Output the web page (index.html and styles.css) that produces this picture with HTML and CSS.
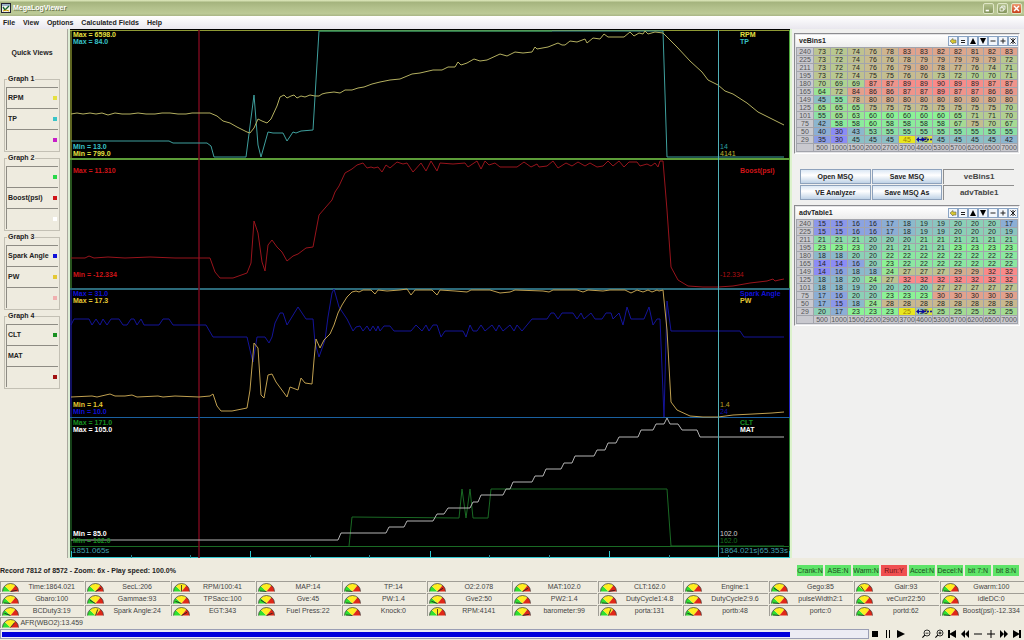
FILE: index.html
```
<!DOCTYPE html>
<html lang="en">
<head>
    <meta charset="UTF-8">
    <meta name="viewport" content="width=device-width, initial-scale=1.0">
    <title>MegaLogViewer</title>
    <link rel="stylesheet" href="styles.css">
</head>
<body>
    <header class="titlebar">
        <svg class="app-icon" viewBox="0 0 10 10"><rect x="0.5" y="0.5" width="9" height="9" fill="#f4f4e8" stroke="#223"/><path d="M1 2h8" stroke="#47a" stroke-width="1"/><path d="M2 4l2 3 4-4" fill="none" stroke="#163" stroke-width="1.4"/><path d="M2 8l3-1 3 1" fill="none" stroke="#c90"/></svg>
        <h1>MegaLogViewer</h1>
        <div class="window-buttons">
            <button class="win" aria-label="Minimize"><svg viewBox="0 0 11 11"><path d="M2 8h4" stroke="#fff" stroke-width="2"/></svg></button>
            <button class="win" aria-label="Restore"><svg viewBox="0 0 11 11"><path d="M4.5 4V2.5h4v4H7M2.5 4.5h4v4h-4z" fill="none" stroke="#fff"/></svg></button>
            <button class="win close" aria-label="Close"><svg viewBox="0 0 11 11"><path d="M2.5 2.5l6 6M8.5 2.5l-6 6" stroke="#fff" stroke-width="1.8"/></svg></button>
        </div>
    </header>
    <nav class="menubar">
        <a href="#">File</a>
        <a href="#">View</a>
        <a href="#">Options</a>
        <a href="#">Calculated Fields</a>
        <a href="#">Help</a>
    </nav>

    <main class="workspace">
        <aside class="sidebar">
            <h2>Quick Views</h2>
            <fieldset>
                <legend>Graph 1</legend>
                <div class="field">RPM<i class="swatch yellow"></i></div>
                <div class="field">TP<i class="swatch cyan"></i></div>
                <div class="field"><i class="swatch magenta"></i></div>
            </fieldset>
            <fieldset>
                <legend>Graph 2</legend>
                <div class="field"><i class="swatch lime"></i></div>
                <div class="field">Boost(psi)<i class="swatch red"></i></div>
                <div class="field"><i class="swatch white"></i></div>
            </fieldset>
            <fieldset>
                <legend>Graph 3</legend>
                <div class="field">Spark Angle<i class="swatch blue"></i></div>
                <div class="field">PW<i class="swatch gold"></i></div>
                <div class="field"><i class="swatch pink"></i></div>
            </fieldset>
            <fieldset>
                <legend>Graph 4</legend>
                <div class="field">CLT<i class="swatch green"></i></div>
                <div class="field">MAT</div>
                <div class="field"><i class="swatch darkred"></i></div>
            </fieldset>
        </aside>

        <section class="chart">
            <svg class="plot" viewBox="70 29 720 529" preserveAspectRatio="none">
                <!-- graph frames -->
                <path d="M70 30.5H790" stroke="#8f9a35"/>
                <path d="M71 30V159" stroke="#b9c840"/>
                <path d="M71 159V289" stroke="#4fa83c"/>
                <path d="M789.5 30V289" stroke="#4fa83c"/>
                <path d="M71 289V418M789.5 289V418" stroke="#2020c0"/>
                <path d="M71 418V558M789.5 418V558" stroke="#2a8030"/>
                <path d="M70 159H790" stroke="#5c9c38" stroke-width="2"/>
                <path d="M70 289H790" stroke="#2c6a7a" stroke-width="2"/>
                <path d="M70 417.5H790" stroke="#1a60a0"/>
                <path d="M70 546.5H790" stroke="#1a6a24"/>
                <!-- time axis -->
                <path d="M70 557.5H790" stroke="#30c8d0"/>
                <path d="M71.5 551V558M250.5 551V558M430.5 551V558M609.5 551V558M789.5 551V558" stroke="#30c8d0"/>
                <path d="M131.5 555V558M190.5 555V558M310.5 555V558M369.5 555V558M489.5 555V558M549.5 555V558M669.5 555V558M728.5 555V558" stroke="#24808c"/>
                <path d="M199 30V558" stroke="#74081c" stroke-width="1.5"/>
                <!-- graph 1 -->
                <polyline stroke="#3fa09e" points="71,141 169,141 173,143 207,143 211,146 214,157 246,157 254,95 258,145 261,157 268,132 273,133 283,133 287,141 293,132 296,133 301,131 313,130 316,80 319,31 663,31 667,157 784,157"/>
                <path d="M319 31H552" stroke="#3f9a48"/>
                <polyline stroke="#b4b060" points="71,114 77,113 83,114 90,113 96,114 102,113 108,115 115,113 122,114 130,114 138,113 146,114 155,114 162,113 170,113 178,114 186,114 192,113 210,113 217,116 223,121 230,123 237,127 247,132 250,133 254,128 258,119 262,121 267,123 271,119 277,106 280,97 284,95 287,98 291,96 294,95 297,98 301,96 305,97 310,95 315,96 319,96 322,94 326,93 334,92 340,93 345,90 352,90 358,88 364,87 372,84 380,82 390,80 400,79 412,74 420,73 433,70 442,70 448,67 455,67 458,62 461,65 467,63 474,59 480,61 487,60 500,54 507,56 515,52 523,53 532,52 535,47 537,49 548,47 558,43 562,45 565,45 570,41 577,42 585,39 587,43 593,38 600,39 604,34 608,37 617,37 624,37 630,32 634,36 639,33 643,34 645,31 648,34 655,32 663,33 668,38 677,47 690,61 702,72 708,80 718,85 725,91 733,94 747,103 758,112 768,117 784,125"/>
                <!-- graph 2 -->
                <polyline stroke="#98141c" points="71,258 85,258 89,256 94,258 108,257 125,258 150,257 175,258 210,258 215,272 220,278 233,278 247,273 251,263 254,221 258,233 262,262 265,271 268,245 272,240 277,247 282,252 287,261 293,256 298,254 306,248 313,247 319,215 332,200 335,192 339,186 345,173 352,169 357,165 363,163 367,168 371,167 374,168 378,167 382,172 386,165 390,168 397,162 403,164 407,163 413,172 421,163 426,171 431,161 437,171 440,163 453,164 465,163 468,167 477,161 481,169 485,161 489,165 495,163 500,167 517,167 524,162 531,167 537,164 539,167 547,166 553,161 558,168 566,163 572,166 578,162 585,166 590,163 597,167 603,166 608,161 613,166 619,161 624,167 629,162 637,162 640,166 647,164 651,166 655,163 658,167 660,161 663,161 667,210 671,267 678,280 688,286 703,287 718,287 733,286 750,283 767,281 773,279 775,281 779,280 784,279"/>
                <!-- graph 3 -->
                <polyline stroke="#14149a" points="71,325 74,319 89,319 92,325 96,319 100,325 103,319 107,325 111,319 119,319 123,325 127,325 131,319 134,319 137,325 141,319 144,325 159,325 163,319 169,319 173,325 206,325 213,337 247,337 250,350 253,362 257,337 265,337 269,343 272,337 275,323 280,313 283,313 287,325 298,307 306,319 313,319 315,343 319,357 325,340 328,317 332,293 334,289 339,307 347,319 353,331 356,327 360,326 363,331 367,326 370,331 373,326 376,331 378,326 380,331 384,326 390,326 394,331 411,331 416,325 422,331 426,325 429,331 433,325 437,325 441,337 445,331 463,331 466,337 470,325 473,331 477,331 481,325 485,331 492,325 496,331 499,325 503,331 510,325 514,331 517,325 522,331 527,325 532,319 547,319 551,313 554,313 558,319 562,313 573,313 577,319 581,313 584,319 591,313 595,319 602,319 606,313 611,313 613,319 619,313 623,325 627,307 631,319 644,319 649,307 653,325 657,319 660,319 664,417 667,301 671,331 740,331 744,337 784,337"/>
                <polyline stroke="#c0a050" points="71,397 92,396 97,397 110,394 115,396 125,396 132,395 137,397 158,396 163,397 175,396 199,397 210,396 213,394 217,406 221,411 232,411 247,408 250,390 254,343 258,348 261,395 264,398 268,375 272,374 276,382 287,397 290,387 298,390 301,378 305,383 312,384 314,360 316,339 320,348 324,340 330,334 334,325 338,313 342,305 347,297 352,292 356,291 359,292 363,290 371,290 375,294 378,290 387,291 400,290 407,289 411,295 415,290 432,290 437,295 440,290 455,291 467,292 471,290 490,290 500,293 510,292 515,290 543,291 549,292 553,290 577,290 583,292 588,290 603,291 610,290 625,290 631,293 637,290 643,292 648,290 652,292 657,290 659,291 663,290 667,330 671,402 677,410 690,416 703,417 718,417 733,415 753,414 772,413 784,412"/>
                <!-- graph 4 -->
                <polyline stroke="#1a6a24" points="349,546 352,517 459,518 462,489 466,518 470,489 473,518 488,518 491,489 667,489 671,546 784,546"/>
                <polyline stroke="#b4b4b4" points="71,540 338,540 341,533 386,533 389,527 404,527 407,521 433,521 437,514 444,514 448,508 470,508 473,502 478,502 481,495 503,495 506,489 510,489 513,482 532,482 535,476 543,476 546,469 561,469 564,463 572,463 575,456 594,456 597,450 605,450 608,443 616,443 619,437 638,437 641,430 653,430 656,424 664,424 667,418 670,424 678,424 682,430 697,430 700,437 784,437"/>
                <path d="M718.5 30V558" stroke="#50b0b8"/>
            </svg>
            <div class="graph">
                <div class="range"><p><b class="yellow">Max = 6598.0</b><b class="cyan">Max = 84.0</b></p><p><b class="cyan">Min = 13.0</b><b class="yellow">Min = 799.0</b></p></div>
                <div class="cursor"><p><b class="yellow">RPM</b><b class="cyan">TP</b></p><p><span class="cyan">14</span><span class="yellow">4141</span></p></div>
            </div>
            <div class="graph single">
                <div class="range"><p><b class="red">Max = 11.310</b></p><p><b class="red">Min = -12.334</b></p></div>
                <div class="cursor"><p><b class="red">Boost(psi)</b></p><p><span class="red">-12.334</span></p></div>
            </div>
            <div class="graph">
                <div class="range"><p><b class="blue">Max = 31.0</b><b class="gold">Max = 17.3</b></p><p><b class="gold">Min = 1.4</b><b class="blue">Min = 10.0</b></p></div>
                <div class="cursor"><p><b class="blue">Spark Angle</b><b class="gold">PW</b></p><p><span class="gold">1.4</span><span class="blue">24</span></p></div>
            </div>
            <div class="graph">
                <div class="range"><p><b class="green">Max = 171.0</b><b class="white">Max = 105.0</b></p><p><b class="white">Min = 85.0</b><b class="green">Min = 162.0</b></p></div>
                <div class="cursor"><p><b class="green">CLT</b><b class="white">MAT</b></p><p><span class="white">102.0</span><span class="green">162.0</span></p></div>
            </div>
            <div class="time-axis"><span>1851.065s</span><span class="now">1864.021s|65.353s</span></div>
        </section>

        <aside class="tuning">
            <section class="map-panel">
                <div class="map-head"><h3>veBins1</h3><div class="map-tools"></div></div>
                <table class="map" id="veBins1"></table>
            </section>
            <div class="actions">
                <button class="action">Open MSQ</button>
                <button class="action">Save MSQ</button>
                <span class="tab">veBins1</span>
                <button class="action">VE Analyzer</button>
                <button class="action">Save MSQ As</button>
                <span class="tab">advTable1</span>
            </div>
            <section class="map-panel">
                <div class="map-head"><h3>advTable1</h3><div class="map-tools"></div></div>
                <table class="map" id="advTable1"></table>
            </section>
        </aside>
    </main>

    <footer>
        <div class="status">
            <strong>Record 7812 of 8572 - Zoom: 6x - Play speed: 100.0%</strong>
            <div class="flags">
                <span>Crank:N</span><span>ASE:N</span><span>Warm:N</span><span class="on">Run:Y</span><span>Accel:N</span><span>Decel:N</span><span>bit 7:N</span><span>bit 8:N</span>
            </div>
        </div>
        <div class="gauges" id="gauges"></div>
        <div class="playbar">
            <progress value="7812" max="8572" aria-label="Log position"></progress>
            <div class="controls">
                <button aria-label="Stop"><svg viewBox="0 0 12 12"><path d="M3 3h6v6H3z"/></svg></button>
                <button aria-label="Pause"><svg viewBox="0 0 12 12"><path d="M4 2h1v8H4zM7 2h1v8H7z"/></svg></button>
                <button aria-label="Play"><svg viewBox="0 0 12 12"><path d="M2 2l8 4-8 4z"/></svg></button>
                <button class="after-gap" aria-label="Zoom out"><svg viewBox="0 0 12 12"><circle cx="7" cy="5" r="3" fill="none" stroke="#000" stroke-width="0.8"/><path d="M5.5 4.7h3v.8h-3zM4.4 6.8l.8.8L2.8 10 2 9.2z"/></svg></button>
                <button aria-label="Zoom in"><svg viewBox="0 0 12 12"><circle cx="7" cy="5" r="3" fill="none" stroke="#000" stroke-width="0.8"/><path d="M5.5 4.6h1.1V3.5h.8v1.1h1.1v.8H7.4v1.1h-.8V5.4H5.5zM4.4 6.8l.8.8L2.8 10 2 9.2z"/></svg></button>
                <button aria-label="First record"><svg viewBox="0 0 12 12"><path d="M2 2h2v3.5L10 2v8L4 6.5V10H2z"/></svg></button>
                <button aria-label="Rewind"><svg viewBox="0 0 12 12"><path d="M6 2v8L2 6zM10 2v8L6 6z"/></svg></button>
                <button aria-label="Slower"><svg viewBox="0 0 12 12"><path d="M2 5.5h8v1H2z"/></svg></button>
                <button aria-label="Faster"><svg viewBox="0 0 12 12"><path d="M5.5 2h1v3.5H10v1H6.5V10h-1V6.5H2v-1h3.5z"/></svg></button>
                <button aria-label="Fast forward"><svg viewBox="0 0 12 12"><path d="M2 2v8l4-4zM6 2v8l4-4z"/></svg></button>
                <button aria-label="Last record"><svg viewBox="0 0 12 12"><path d="M10 2H8v3.5L2 2v8l6-3.5V10h2z"/></svg></button>
            </div>
        </div>
    </footer>
    <script src="script.js"></script>
</body>
</html>
```
FILE: styles.css
```
* {
    box-sizing: border-box;
}
body {
    margin: 0;
    min-height: 100vh;
    display: flex;
    flex-direction: column;
    font-family: "Liberation Sans", Arial, sans-serif;
    font-size: 7px;
    line-height: 8px;
    color: #222;
    background: #eeebdf;
}
h1, h2, h3, p, fieldset {
    margin: 0;
    padding: 0;
}
button {
    font: inherit;
    padding: 0;
    margin: 0;
}
svg {
    display: block;
}
.titlebar {
    height: 16px;
    display: flex;
    align-items: center;
    gap: 2px;
    padding: 0 2px 0 1px;
    background: linear-gradient(#e2ecc0, #a5b47e 15%, #b3c18c 50%, #bcca97 85%, #a9b587);
}
.app-icon {
    width: 10px;
    height: 10px;
}
.titlebar h1 {
    flex: 1;
    font-size: 7px;
    color: #fff;
    text-shadow: 1px 1px 0 #6d7850;
}
.window-buttons {
    display: flex;
    gap: 3px;
}
.win {
    width: 11px;
    height: 11px;
    border: 1px solid #dfe6c6;
    border-radius: 2px;
    background: linear-gradient(#b4c28e, #84955c);
}
.win svg {
    width: 9px;
    height: 9px;
}
.win.close {
    background: linear-gradient(#ee9a72, #c8401c);
}
.menubar {
    height: 13px;
    display: flex;
    align-items: center;
    gap: 8px;
    padding: 0 3px;
    background: linear-gradient(#fff, #e9e7ee);
    font-weight: bold;
}
.menubar a {
    color: #222;
    text-decoration: none;
}
.workspace {
    flex: 1;
    display: grid;
    grid-template-columns: 70px 1fr 234px;
}

/* left column */
.sidebar {
    display: flex;
    flex-direction: column;
    gap: 2px;
    padding: 20px 8px 0 4px;
    font-weight: bold;
    border-right: 2px solid #dcecd4;
    box-shadow: inset -1px 0 0 #a9a79e;
}
.sidebar h2 {
    font-size: 7px;
    text-align: center;
    margin-bottom: 16px;
}
fieldset {
    min-width: 0;
    border: 1px solid #c3c0b4;
    padding: 4px 1px 1px;
}
legend {
    margin-left: 1px;
    padding: 0 1px;
}
.field {
    height: 21px;
    display: flex;
    align-items: center;
    justify-content: space-between;
    padding: 0 1px 0 1px;
    border-top: 1px solid #8e8c84;
    border-left: 1px solid #8e8c84;
}
.swatch {
    width: 4px;
    height: 4px;
    margin-left: auto;
    background: currentColor;
}
.yellow { color: #e6e040; }
.cyan { color: #38c4c8; }
.magenta { color: #c81ec8; }
.lime { color: #28d848; }
.red { color: #d01418; }
.white { color: #fff; }
.blue { color: #1010d8; }
.gold { color: #e4c834; }
.pink { color: #f0b0b0; }
.green { color: #189020; }
.darkred { color: #a01010; }

/* graphs */
.chart {
    position: relative;
    display: grid;
    grid-template-rows: 130fr 129fr 129fr 129fr 12px;
    background: #000;
}
.plot {
    position: absolute;
    left: 0;
    top: 0;
    width: 100%;
    height: 100%;
    fill: none;
}
.plot * {
    vector-effect: non-scaling-stroke;
}
.graph {
    position: relative;
    display: flex;
    justify-content: space-between;
    padding: 2px 0 2px 3px;
}
.graph.single {
    padding: 8px 0 10px 3px;
}
.range, .cursor {
    display: flex;
    flex-direction: column;
    justify-content: space-between;
    line-height: 7px;
}
.cursor {
    width: 70px;
}
.cursor p:first-child {
    padding-left: 20px;
}
.graph b, .graph span {
    display: block;
}
.graph span {
    opacity: 0.8;
}
.time-axis {
    position: relative;
    display: flex;
    justify-content: space-between;
    padding-left: 2px;
    line-height: 10px;
    font-size: 8px;
    color: #40a0b0;
}
.time-axis .now {
    width: 70px;
}

/* tuning maps */
.tuning {
    padding: 4px 4px 0 2px;
    border-left: 2px solid #dcf2cc;
    background: #f0f0ef;
}
.map-panel {
    padding: 1px;
    border: 1px solid #8c8c90;
    border-right-color: #fff;
    border-bottom-color: #fff;
    background: #e4e4e6;
}
.map-head {
    display: flex;
    align-items: center;
    justify-content: space-between;
    height: 12px;
    padding-left: 3px;
    background: linear-gradient(#fff, #ececec);
}
.map-head h3 {
    font-size: 7px;
}
.map-tools {
    display: flex;
}
.map-tools button {
    width: 10px;
    height: 10px;
    border: 1px solid #8aa4c4;
    background: #f2f6fb;
}
.map-tools svg {
    width: 8px;
    height: 8px;
}
.map {
    width: 100%;
    table-layout: fixed;
    border-collapse: collapse;
    line-height: 7px;
    text-align: center;
}
.map td, .map th {
    padding: 0;
    height: 8px;
    border: 1px solid #a2a4ac;
    font-weight: normal;
    white-space: nowrap;
}
.map th {
    color: #555;
    background: #c9c9cf;
}
.map th:first-child {
    width: 17px;
}
.map .tracked {
    background: #e8e820;
    color: #a08000;
}
.map .trace {
    position: relative;
    background: linear-gradient(90deg, #8cc0c8 30%, #e8e820);
}
.trace svg {
    position: absolute;
    left: 0;
    top: 1px;
    width: 100%;
    height: 5px;
}
.actions {
    display: grid;
    grid-template-columns: repeat(3, 1fr);
    gap: 1px;
    padding: 15px 6px 5px;
    font-weight: bold;
}
.action {
    height: 15px;
    border: 1px solid #8ea2bc;
    background: linear-gradient(#dbe7f4, #fff 40%, #bfd2e6);
    color: #222;
}
.tab {
    height: 15px;
    line-height: 14px;
    font-size: 8px;
    text-align: center;
    color: #444;
    border-top: 1px solid #8e8e8e;
    border-left: 1px solid #8e8e8e;
}

/* status, gauges and playback */
.status {
    height: 23px;
    display: flex;
    align-items: center;
    justify-content: space-between;
    padding: 2px 5px 0 0;
}
.flags {
    display: flex;
    gap: 2px;
}
.flags span {
    width: 26px;
    line-height: 11px;
    text-align: center;
    background: #5ee468;
    color: #1c4c20;
}
.flags .on {
    background: #f05050;
    color: #701010;
}
.gauges {
    display: grid;
    grid-template-columns: repeat(12, 1fr);
    gap: 1px;
}
.gauge {
    display: flex;
    align-items: center;
    height: 11px;
    padding-left: 1px;
    border-top: 1px solid #a09e96;
    border-left: 1px solid #a09e96;
    color: #444;
    white-space: nowrap;
}
.gauge svg {
    width: 17px;
    height: 9px;
}
.gauge span {
    flex: 1;
    text-align: center;
}
.playbar {
    display: flex;
    align-items: center;
    height: 12px;
}
progress {
    flex: 1;
    height: 10px;
    padding: 2px 1px 1px;
    appearance: none;
    border: 1px solid #9a9eb4;
    background: #ececf4;
}
progress::-webkit-progress-bar {
    background: #ececf4;
}
progress::-webkit-progress-value {
    background: #0000dc;
}
.controls {
    display: flex;
}
.controls button {
    width: 13px;
    height: 12px;
    border: 0;
    background: none;
}
.controls svg {
    width: 12px;
    height: 12px;
}
.controls .after-gap {
    margin-left: 12px;
}
```
FILE: script.js
```
const load = [240, 225, 211, 195, 180, 165, 149, 125, 101, 75, 50, 29];

const maps = {
    veBins1: {
        low: 30, high: 90,
        rpm: [500, 1000, 1500, 2000, 2700, 3700, 4600, 5300, 5700, 6200, 6500, 7000],
        rows: [
            [73, 72, 74, 76, 78, 83, 83, 82, 82, 81, 82, 83],
            [73, 72, 74, 76, 76, 78, 79, 79, 79, 79, 79, 72],
            [73, 72, 74, 76, 76, 79, 80, 78, 77, 76, 74, 71],
            [73, 72, 74, 75, 75, 76, 76, 73, 72, 70, 70, 71],
            [70, 69, 69, 87, 87, 89, 89, 90, 89, 89, 87, 87],
            [64, 72, 84, 86, 86, 87, 87, 89, 87, 87, 86, 86],
            [45, 55, 78, 80, 80, 80, 80, 80, 80, 80, 80, 80],
            [65, 65, 65, 75, 75, 75, 75, 75, 75, 75, 75, 70],
            [55, 65, 63, 60, 60, 60, 60, 60, 65, 71, 71, 70],
            [42, 58, 58, 60, 58, 58, 58, 58, 67, 75, 70, 67],
            [40, 30, 43, 53, 55, 55, 55, 55, 55, 55, 55, 55],
            [35, 30, 45, 45, 45, 45, 45, 45, 45, 45, 45, 42]
        ]
    },
    advTable1: {
        low: 14, high: 32,
        rpm: [500, 1000, 1500, 2200, 2900, 3700, 4600, 5300, 5700, 6200, 6500, 7000],
        rows: [
            [15, 15, 16, 16, 17, 18, 19, 19, 20, 20, 20, 17],
            [15, 15, 16, 16, 17, 18, 19, 19, 20, 20, 20, 19],
            [21, 21, 21, 20, 20, 20, 21, 21, 21, 21, 21, 21],
            [23, 23, 23, 20, 21, 21, 21, 21, 23, 23, 23, 23],
            [18, 18, 20, 20, 22, 22, 22, 22, 22, 22, 22, 22],
            [14, 14, 16, 20, 23, 22, 22, 22, 22, 22, 22, 22],
            [14, 16, 18, 18, 24, 27, 27, 27, 29, 29, 32, 32],
            [18, 18, 20, 24, 27, 32, 32, 32, 32, 32, 32, 32],
            [18, 18, 19, 20, 20, 20, 20, 27, 27, 27, 27, 27],
            [17, 16, 20, 20, 23, 23, 23, 30, 30, 30, 30, 30],
            [17, 15, 18, 24, 28, 28, 28, 28, 28, 28, 28, 28],
            [20, 17, 23, 23, 23, 25, 25, 25, 25, 25, 25, 25]
        ]
    }
};

// blue at the low end, green in the middle, red at the high end
function heat(value, low, high) {
    const t = (value - low) / (high - low);
    const stops = t < 0.5 ? [[140, 140, 245], [140, 242, 150]] : [[140, 242, 150], [250, 138, 138]];
    const k = t < 0.5 ? t * 2 : (t - 0.5) * 2;
    return `rgb(${stops[0].map((c, i) => Math.round(c + (stops[1][i] - c) * k)).join(',')})`;
}

const trace = '<svg viewBox="0 0 16 5" preserveAspectRatio="none"><path d="M0 2.5L3 0V2H10V3H3V5z" fill="#0808a0"/><circle cx="7" cy="2.5" r="1.5" fill="#0808a0"/><circle cx="12" cy="2.5" r="1" fill="#0808a0"/><circle cx="15" cy="2.5" r="1" fill="#0808a0"/></svg>';

for (const [id, map] of Object.entries(maps)) {
    let html = '<tbody>';
    map.rows.forEach((row, r) => {
        html += `<tr><th scope="row">${load[r]}</th>`;
        row.forEach((value, c) => {
            if (r === 11 && c === 5) {
                html += `<td class="tracked">${value}</td>`;
            } else if (r === 11 && c === 6) {
                html += `<td class="trace">${value}${trace}</td>`;
            } else {
                html += `<td style="background:${heat(value, map.low, map.high)}">${value}</td>`;
            }
        });
        html += '</tr>';
    });
    html += '<tr><th></th>' + map.rpm.map(v => `<th scope="col">${v}</th>`).join('') + '</tr></tbody>';
    document.getElementById(id).innerHTML = html;
}

const tools = [
    ['Load', '<path d="M1 4L4 1.5V3H7V6H4V7z" fill="#d8c830" stroke="#665" stroke-width="0.6"/>'],
    ['Set', '<path d="M2 3.5h4M2 5.5h4" stroke="#222"/>'],
    ['Up', '<path d="M4 1L7 7H1z"/>'],
    ['Down', '<path d="M1 1H7L4 7z"/>'],
    ['Subtract', '<path d="M1.5 4h5" stroke="#222"/>'],
    ['Add', '<path d="M1.5 4h5M4 1.5v5" stroke="#222"/>'],
    ['Multiply', '<path d="M1.5 1.5l5 5M6.5 1.5l-5 5M4 1v6" stroke="#222"/>']
];
document.querySelectorAll('.map-tools').forEach(bar => {
    bar.innerHTML = tools.map(([name, shape]) =>
        `<button aria-label="${name}"><svg viewBox="0 0 8 8">${shape}</svg></button>`).join('');
});

// [label, needle angle], 0 points straight up
const gauges = [
    ['Time:1864.021', 80], ['SecL:206', 60], ['RPM/100:41', 0], ['MAP:14', -85], ['TP:14', -85], ['O2:2.078', 60],
    ['MAT:102.0', 60], ['CLT:162.0', 80], ['Engine:1', -85], ['Gego:85', -60], ['Gair:93', -35], ['Gwarm:100', -85],
    ['Gbaro:100', -85], ['Gammae:93', -60], ['TPSacc:100', -70], ['Gve:45', -60], ['PW:1.4', -85], ['Gve2:50', -70],
    ['PW2:1.4', -85], ['DutyCycle1:4.8', -85], ['DutyCycle2:9.6', -85], ['pulseWidth2:1', -85], ['veCurr22:50', -85], ['idleDC:0', -85],
    ['BCDuty3:19', -70], ['Spark Angle:24', 20], ['EGT:343', 60], ['Fuel Press:22', 70], ['Knock:0', -85], ['RPM:4141', 0],
    ['barometer:99', 80], ['porta:131', 20], ['portb:48', -70], ['portc:0', -85], ['portd:62', -85], ['Boost(psi):-12.334', -85],
    ['AFR(WBO2):13.459', 40]
];
document.getElementById('gauges').innerHTML = gauges.map(([label, angle]) => `
    <div class="gauge">
        <svg viewBox="0 0 17 9">
            <path d="M8.5 8.5L.5 8.5A8 8 0 0 1 2.8 2.9z" fill="#30e030"/>
            <path d="M8.5 8.5L2.8 2.9A8 8 0 0 1 13.6 2.3z" fill="#ffee20"/>
            <path d="M8.5 8.5L13.6 2.3A8 8 0 0 1 16.5 8.5z" fill="#e02818"/>
            <path d="M.5 8.5A8 8 0 0 1 16.5 8.5" fill="none" stroke="#333" stroke-width="0.7"/>
            <path d="M8.5 8.5V2" stroke="#222" stroke-width="0.8" transform="rotate(${angle} 8.5 8.5)"/>
        </svg>
        <span>${label}</span>
    </div>`).join('');
```
